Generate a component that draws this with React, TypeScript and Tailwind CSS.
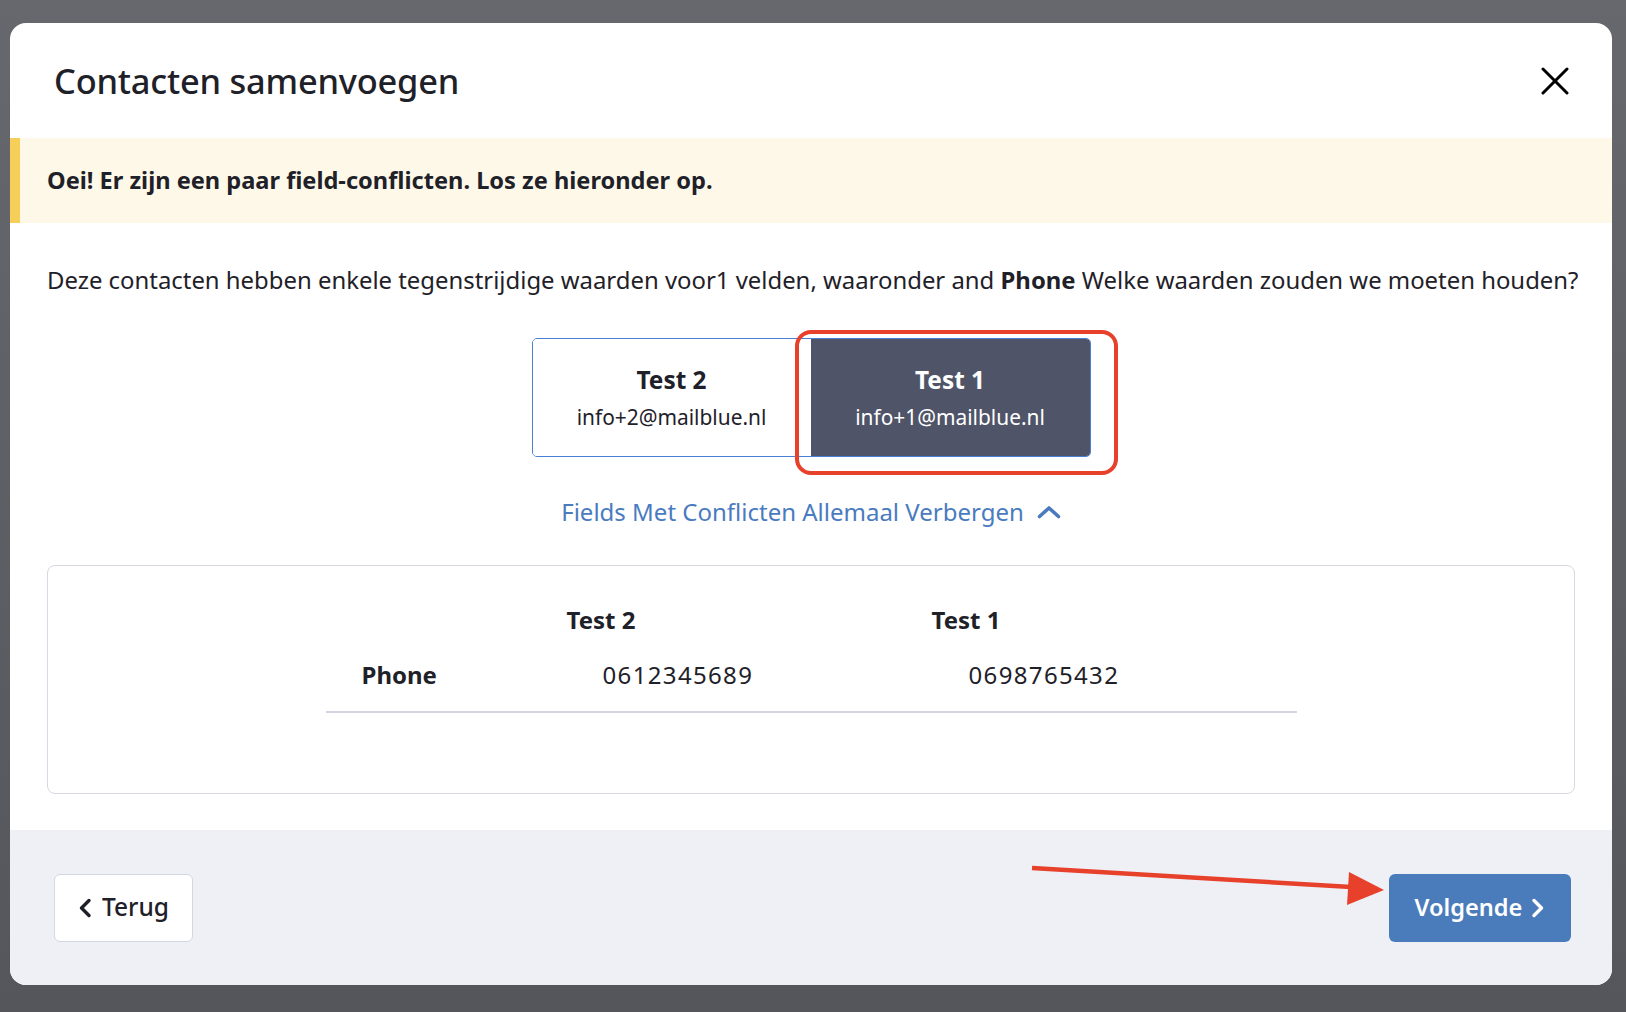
import React from "react";

function ChevronL() {
  return (
    <svg width="14" height="20" viewBox="0 0 14 20" fill="none">
      <polyline points="11,2.5 3.5,10 11,17.5" stroke="currentColor" strokeWidth="3.4" strokeLinecap="round" strokeLinejoin="round" />
    </svg>
  );
}
function ChevronR() {
  return (
    <svg width="14" height="20" viewBox="0 0 14 20" fill="none">
      <polyline points="3,2.5 10.5,10 3,17.5" stroke="currentColor" strokeWidth="3.4" strokeLinecap="round" strokeLinejoin="round" />
    </svg>
  );
}
function ChevronU() {
  return (
    <svg width="24" height="14" viewBox="0 0 24 14" fill="none">
      <polyline points="2.5,11.5 12,3 21.5,11.5" stroke="currentColor" strokeWidth="3.6" strokeLinecap="round" strokeLinejoin="round" />
    </svg>
  );
}
function CloseX() {
  return (
    <svg width="28" height="28" viewBox="0 0 28 28" fill="none">
      <line x1="2" y1="2" x2="26" y2="26" stroke="#000" strokeWidth="3" strokeLinecap="round" />
      <line x1="26" y1="2" x2="2" y2="26" stroke="#000" strokeWidth="3" strokeLinecap="round" />
    </svg>
  );
}

export default function App() {
  return (
    <div
      className="w-[1626px] h-[1012px] overflow-hidden bg-gradient-to-b from-[#67686d] to-[#55565b] flex"
      style={{ fontFamily: '"Noto Sans", "Open Sans", sans-serif' }}
    >
      <div className="relative ml-[10px] mt-[23px] w-[1602px] h-[962px] bg-white rounded-[16px] overflow-hidden flex flex-col text-[#1f2129]">
        {/* Header */}
        <div className="h-[115px] shrink-0 flex items-center justify-between pl-[44px] pr-[43px]">
          <h1 className="text-[34.4px] font-medium tracking-[-0.2px]">Contacten samenvoegen</h1>
          <CloseX />
        </div>

        {/* Warning banner */}
        <div className="h-[85px] shrink-0 flex items-center border-l-[10px] border-[#f5cf5a] bg-[#fef8e9] pl-[27px]">
          <p className="text-[23.6px] font-bold">Oei! Er zijn een paar field-conflicten. Los ze hieronder op.</p>
        </div>

        {/* Body */}
        <div className="flex-1 flex flex-col px-[37px]">
          <p className="mt-[42px] text-[23.9px] leading-[30px] whitespace-nowrap">
            Deze contacten hebben enkele tegenstrijdige waarden voor1 velden, waaronder and <b>Phone</b> Welke waarden zouden we moeten houden?
          </p>

          <div className="relative mt-[43px] self-center flex w-[559px] h-[119px] rounded-[5px] border border-[#4a7fd6] overflow-hidden">
            <div className="flex-1 flex flex-col items-center justify-center bg-white">
              <span className="text-[24.4px] font-bold leading-[30px]">Test 2</span>
              <span className="text-[20.9px] leading-[28px] mt-[8px]">info+2@mailblue.nl</span>
            </div>
            <div className="w-[279px] flex flex-col items-center justify-center bg-[#4f5468] text-white">
              <span className="text-[24.4px] font-bold leading-[30px]">Test 1</span>
              <span className="text-[20.9px] leading-[28px] mt-[8px]">info+1@mailblue.nl</span>
            </div>
          </div>

          <div className="mt-[42px] self-center flex items-center gap-[13px] text-[#4a7bbf] text-[24px] leading-[26px]">
            <span>Fields Met Conflicten Allemaal Verbergen</span>
            <ChevronU />
          </div>

          <div className="mt-[40px] h-[229px] rounded-[8px] border border-[#d6d8e2] flex justify-center">
            <div className="w-[971px] mt-[39px]">
              <div className="grid grid-cols-[241px_365px_1fr] border-b-2 border-[#d3d6e2] text-[24px]">
                <div className="h-[30px]" />
                <div className="h-[30px] leading-[30px] font-bold">Test 2</div>
                <div className="h-[30px] leading-[30px] font-bold">Test 1</div>
                <div className="pl-[36px] pt-[25px] pb-[21px] leading-[30px] font-bold">Phone</div>
                <div className="pl-[36px] pt-[25px] pb-[21px] leading-[30px] tracking-[1.35px]">0612345689</div>
                <div className="pl-[37px] pt-[25px] pb-[21px] leading-[30px] tracking-[1.35px]">0698765432</div>
              </div>
            </div>
          </div>
        </div>

        {/* Footer */}
        <div className="h-[155px] shrink-0 bg-[#eef0f5] flex items-center justify-between pl-[44px] pr-[41px]">
          <button className="h-[68px] w-[139px] bg-white border border-[#d3d6e4] rounded-[6px] flex items-center justify-center gap-[10px] text-[24.5px] font-medium">
            <ChevronL />
            <span>Terug</span>
          </button>
          <button className="h-[68px] w-[182px] bg-[#4a7cbc] rounded-[6px] flex items-center justify-center gap-[9px] text-white text-[23.6px] font-semibold">
            <span>Volgende</span>
            <ChevronR />
          </button>
        </div>

        {/* Red highlight around selected option */}
        <div className="absolute left-[785px] top-[307px] w-[323px] h-[145px] rounded-[16px] border-[4px] border-[#e8412b] pointer-events-none" />

        {/* Red arrow */}
        <svg className="absolute left-[1015px] top-[836px] pointer-events-none" width="360" height="50" viewBox="0 0 360 50">
          <line x1="7" y1="9" x2="326" y2="28" stroke="#e8412b" strokeWidth="4.5" />
          <polygon points="324,13 359,31 322,46" fill="#e8412b" />
        </svg>
      </div>
    </div>
  );
}
